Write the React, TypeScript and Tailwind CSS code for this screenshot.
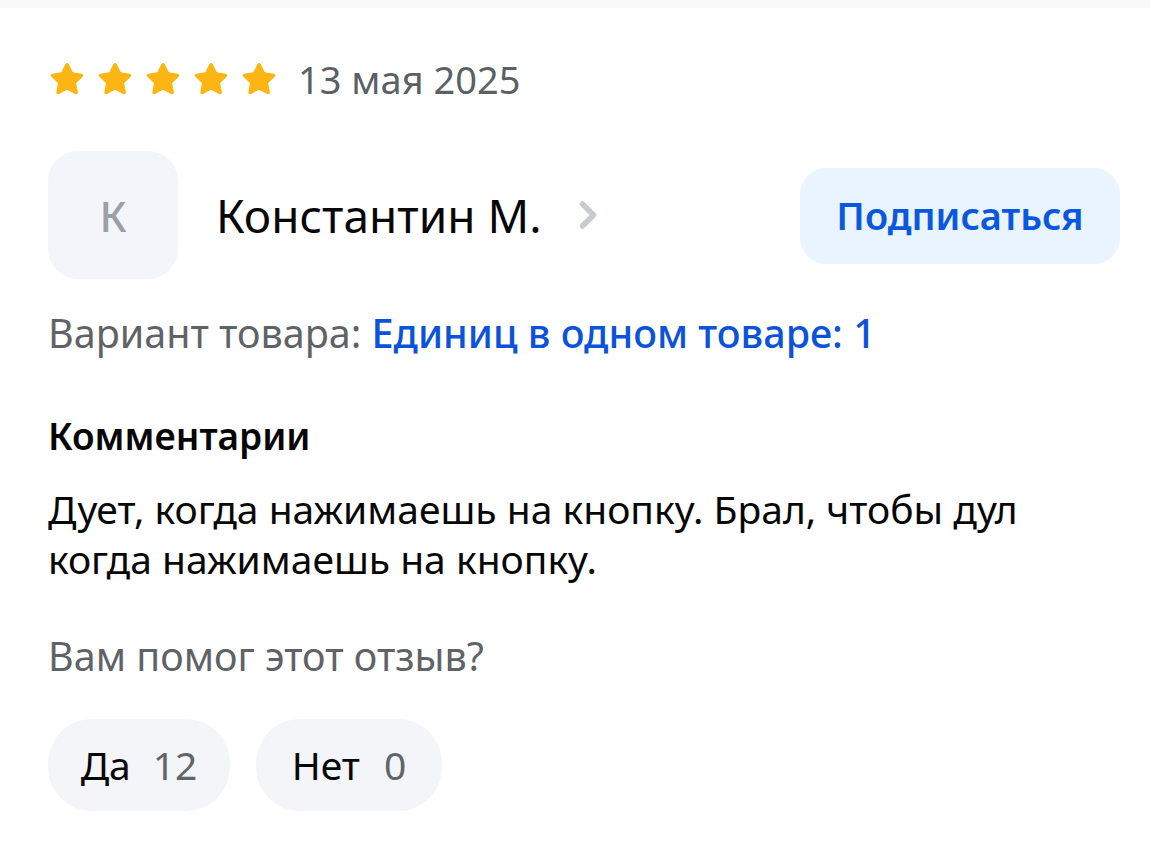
import { ChevronRight } from 'lucide-react'

function Star() {
  return (
    <svg width="38" height="36" viewBox="0 0 24 23" className="shrink-0">
      <path
        d="M12 1.2c.5 0 .9.3 1.1.7l2.6 5.3 5.8.9c.9.1 1.3 1.3.6 1.9l-4.2 4.1 1 5.8c.2.9-.8 1.6-1.6 1.2L12 18.3l-5.2 2.8c-.8.4-1.8-.3-1.6-1.2l1-5.8L2 10c-.7-.6-.3-1.8.6-1.9l5.8-.9L11 1.9c.2-.4.6-.7 1-.7z"
        fill="#fbb613"
      />
    </svg>
  )
}

export default function App() {
  return (
    <div className="min-h-[868px] w-[1150px] bg-white font-['Noto_Sans',sans-serif]">
      <div className="h-2 bg-[#f9f9f9]" />
      <div className="pl-12 pr-[30px] pt-[52px]">
        {/* rating + date */}
        <div className="flex items-center">
          <div className="flex gap-[10px]">
            <Star />
            <Star />
            <Star />
            <Star />
            <Star />
          </div>
          <span className="ml-[20px] text-[38px] leading-none text-[#5b5f66]">13 мая 2025</span>
        </div>

        {/* author */}
        <div className="mt-[53px] flex items-center justify-between">
          <div className="flex items-center">
            <div className="flex h-[128px] w-[130px] items-center justify-center rounded-[30px] bg-[#f2f5f9] text-[42px] font-medium text-[#9aa0a6]">
              К
            </div>
            <span className="ml-[38px] text-[46px] leading-none text-[#070707]">Константин М.</span>
            <ChevronRight className="ml-[24px] text-[#c8cbcf]" size={44} strokeWidth={3} />
          </div>
          <button className="mt-[1px] flex h-[96px] w-[320px] items-center justify-center rounded-[26px] bg-[#e9f4fe] text-[38px] font-semibold text-[#0a57e0]">
            Подписаться
          </button>
        </div>

        {/* variant */}
        <div className="mt-[30px] text-[39.5px] leading-[48px]">
          <span className="text-[#5f6368]">Вариант товара: </span>
          <span className="font-medium text-[#0b52dc]">Единиц в одном товаре: 1</span>
        </div>

        {/* comment */}
        <div className="mt-[55px] text-[37px] font-semibold leading-[48px] text-[#070707]">
          Комментарии
        </div>
        <p className="mt-[24px] text-[39px] leading-[50px] text-[#070707]">
          Дует, когда нажимаешь на кнопку. Брал, чтобы дул
          <br />
          когда нажимаешь на кнопку.
        </p>

        <div className="mt-[48px] text-[39.5px] leading-[48px] text-[#5f6368]">
          Вам помог этот отзыв?
        </div>

        {/* helpful */}
        <div className="mt-[39px] flex gap-[26px]">
          <button className="flex h-[92px] w-[182px] items-center justify-center gap-[22px] rounded-[44px] bg-[#f3f5f8] text-[39px]">
            <span className="text-[#070707]">Да</span>
            <span className="text-[#60656b]">12</span>
          </button>
          <button className="flex h-[92px] w-[186px] items-center justify-center gap-[24px] rounded-[44px] bg-[#f3f5f8] text-[39px]">
            <span className="text-[#070707]">Нет</span>
            <span className="text-[#60656b]">0</span>
          </button>
        </div>
      </div>
    </div>
  )
}
